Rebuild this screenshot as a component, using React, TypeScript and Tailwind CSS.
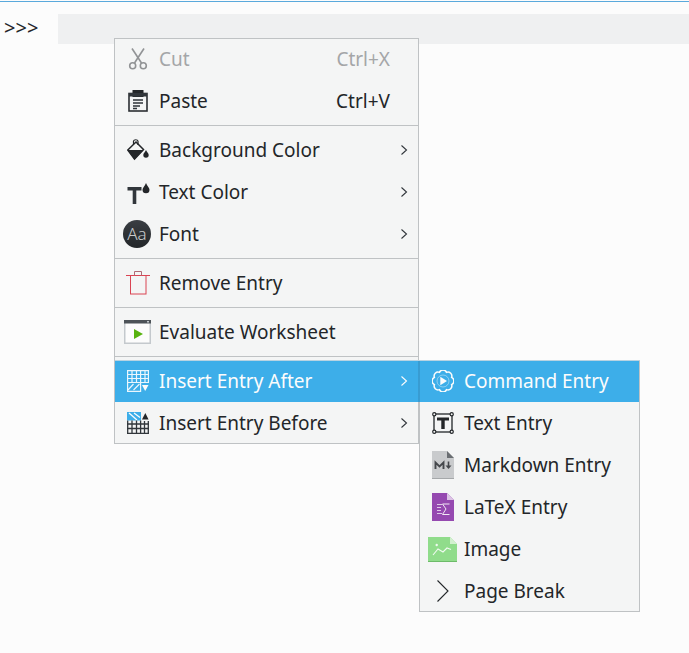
import React from "react";

const Chevron = () => (
  <svg width="8" height="12" viewBox="0 0 8 12" fill="none" stroke="currentColor" strokeWidth="1.1">
    <path d="M1.5 1.5 L6.5 6 L1.5 10.5" />
  </svg>
);

const Scissors = () => (
  <svg width="20" height="22" viewBox="0 0 20 22" fill="none" stroke="#919395" strokeWidth="1.6">
    <path d="M4 0.5 L13.5 15" />
    <path d="M16 0.5 L6.5 15" />
    <circle cx="4.7" cy="17.7" r="3" />
    <circle cx="15.3" cy="17.7" r="3" />
  </svg>
);

const Clipboard = () => (
  <svg width="20" height="22" viewBox="0 0 20 22" fill="none">
    <rect x="1" y="3.5" width="18" height="17.5" fill="#f4f5f5" stroke="#2b2f33" strokeWidth="1.6" />
    <rect x="4.5" y="0" width="11" height="7" fill="#232629" />
    <rect x="1" y="3" width="18" height="3.5" fill="#31363b" />
    <path d="M5 10H15M5 13H15M5 16H12M5 18.5H9" stroke="#31363b" strokeWidth="1.3" />
  </svg>
);

const Bucket = () => (
  <svg width="22" height="22" viewBox="0 0 22 22">
    <path d="M0.8 11 L9 3 L16.5 10.5 L7.5 20 Z" fill="none" stroke="#232629" strokeWidth="1.5" />
    <path d="M0.5 11 H16.5 L7.5 20.5 Z" fill="#232629" />
    <path d="M6.5 5.5 V2.2 A2.3 1.8 0 0 1 11 2.2 V6" fill="none" stroke="#232629" strokeWidth="1.2" />
    <path d="M19 11 C20 13.5 21.7 14.2 21.7 16 A2.7 2.7 0 0 1 16.3 16 C16.3 14.2 18 13.5 19 11 Z" fill="#232629" />
  </svg>
);

const TextColor = () => (
  <svg width="24" height="24" viewBox="0 0 24 24">
    <path d="M1.5 7 H15.5 V10.5 H10.3 V24 H6.7 V10.5 H1.5 Z" fill="#31363b" />
    <path d="M20 3 C21 6 23.5 7.5 23.5 9.7 A3.5 3.5 0 0 1 16.5 9.7 C16.5 7.5 19 6 20 3 Z" fill="#232629" />
  </svg>
);

const FontIcon = () => (
  <div className="-ml-px flex h-[28px] w-[28px] items-center justify-center rounded-full bg-gradient-to-b from-[#3a3e43] to-[#232629] text-[17px] font-light text-[#c8cacc]">
    Aa
  </div>
);

const Trash = () => (
  <svg width="24" height="24" viewBox="0 0 24 24" fill="none" stroke="#da4453" strokeWidth="1">
    <path d="M0 4.5 H24" />
    <rect x="4.5" y="4.5" width="15.5" height="18.5" />
    <path d="M8.5 4.5 V0.5 H15.5 V4.5" stroke="#b06a74" />
  </svg>
);

const Evaluate = () => (
  <svg width="28" height="24" viewBox="0 0 28 24">
    <rect x="0.75" y="0.75" width="25.5" height="22.5" fill="#fcfcfc" stroke="#c4c9cd" strokeWidth="1.5" />
    <rect x="0" y="0" width="27" height="3.5" fill="#4d5358" />
    <rect x="23" y="1" width="2" height="1.5" fill="#c4c9cd" />
    <path d="M10 9 L19 14 L10 19 Z" fill="#58b30f" />
  </svg>
);

const GridAfter = () => (
  <svg width="22" height="22" viewBox="0 0 22 22" fill="none" stroke="#eaf6fd" strokeWidth="1.2">
    <path d="M0 0.6 H22 M0 4.5 H22 M0 8.5 H22 M0 12.5 H22 M0 21.4 H14 M0.6 0 V22 M5 0 V12.5 M9.5 0 V12.5 M13.6 0 V22 M18 0 V12.5 M21.4 0 V13" />
    <path d="M1 20 L6.5 14 M6.5 20 L12.5 14" />
    <path d="M15 15 H21.5 L18.2 21 Z" fill="#fcfcfc" stroke="none" />
  </svg>
);

const GridBefore = () => (
  <svg width="22" height="22" viewBox="0 0 22 22" fill="none" stroke="#31363b" strokeWidth="1.3">
    <rect x="0" y="0" width="14" height="8.5" fill="#3daee9" stroke="none" />
    <path d="M2 1 L10 8 M7 1 L13 5.5" stroke="#fcfcfc" />
    <path d="M0.7 8.5 V21.5 M5 8.5 V21.5 M9.5 8.5 V21.5 M13.6 8.5 V21.5 M17.5 9 V21.5 M21.3 9 V21.5 M0 12 H22 M0 16.5 H22 M0 21.3 H22" />
    <path d="M15 7.5 L18.3 1 L21.6 7.5 Z" fill="#232629" stroke="none" />
  </svg>
);

const CommandIcon = () => (
  <svg width="22" height="22" viewBox="0 0 22 22" fill="none" stroke="#fcfcfc" strokeWidth="1.5">
    <path d="M19.6 14.56 A3.9 3.9 0 0 1 14.56 19.6 A3.9 3.9 0 0 1 7.44 19.6 A3.9 3.9 0 0 1 2.4 14.56 A3.9 3.9 0 0 1 2.4 7.44 A3.9 3.9 0 0 1 7.44 2.4 A3.9 3.9 0 0 1 14.56 2.4 A3.9 3.9 0 0 1 19.6 7.44 A3.9 3.9 0 0 1 19.6 14.56 Z" />
    <circle cx="11" cy="11" r="6" strokeWidth="0.7" opacity="0.6" />
    <path d="M8.3 6.8 L15 11 L8.3 15.2 Z" fill="#fcfcfc" stroke="none" />
  </svg>
);

const TextEntry = () => (
  <svg width="22" height="22" viewBox="0 0 22 22" fill="none" stroke="#232629">
    <rect x="2" y="2" width="18" height="18" strokeWidth="1.3" />
    <circle cx="2.3" cy="2.3" r="1.6" fill="#f4f5f5" strokeWidth="1.2" />
    <circle cx="19.7" cy="2.3" r="1.6" fill="#f4f5f5" strokeWidth="1.2" />
    <circle cx="2.3" cy="19.7" r="1.6" fill="#f4f5f5" strokeWidth="1.2" />
    <circle cx="19.7" cy="19.7" r="1.6" fill="#f4f5f5" strokeWidth="1.2" />
    <path d="M5 5.5 H17 V8.5 H12.7 V17 H9.3 V8.5 H5 Z" fill="#232629" stroke="none" />
  </svg>
);

const Markdown = () => (
  <svg width="22" height="28" viewBox="0 0 22 28">
    <path d="M0 0 H15 L22 7 V28 H0 Z" fill="#c9cbcd" />
    <path d="M15 0 L22 7 H15 Z" fill="#6a6e72" />
    <rect y="27" width="22" height="1" fill="#a5a8aa" />
    <path d="M3.5 18 V11.5 L7.5 15.5 L11.5 11.5 V18" fill="none" stroke="#45484c" strokeWidth="1.9" />
    <path d="M16.5 10.5 V15" stroke="#45484c" strokeWidth="1.6" />
    <path d="M13.5 14.5 H19.5 L16.5 18 Z" fill="#45484c" />
  </svg>
);

const Latex = () => (
  <svg width="22" height="28" viewBox="0 0 22 28">
    <path d="M0 0 H15 L22 7 V28 H0 Z" fill="#9549b0" />
    <path d="M15 0 L22 7 H15 Z" fill="#dcc3e5" />
    <path d="M5 11.5 H10 M5 14.5 H9 M5 17.5 H9 M5 20.5 H10" stroke="#e8d8ee" strokeWidth="0.9" />
    <path d="M17.5 11 H10.5 L14 16 L10.5 21.5 H17.5" fill="none" stroke="#f2e9f5" strokeWidth="1" />
  </svg>
);

const ImageIcon = () => (
  <svg width="29" height="25" viewBox="0 0 29 25">
    <path d="M0 0 H22 L29 7 V25 H0 Z" fill="#90dc8b" />
    <path d="M22 0 L29 7 H22 Z" fill="#d2f0cf" />
    <rect y="24" width="29" height="1" fill="#6dbb69" />
    <circle cx="8.7" cy="8" r="1.2" fill="#f0faf0" />
    <path d="M5 18 L10 12 L15 15 L19 11 L23 12.5" fill="none" stroke="#f0faf0" strokeWidth="1.1" />
  </svg>
);

const PageBreak = () => (
  <svg width="14" height="24" viewBox="0 0 14 24" fill="none" stroke="#232629" strokeWidth="1.1">
    <path d="M1.5 1.5 L12 12 L1.5 22.5" />
  </svg>
);

type RowProps = {
  icon: React.ReactNode;
  label: string;
  shortcut?: string;
  arrow?: boolean;
  disabled?: boolean;
  active?: boolean;
};

const Row = ({ icon, label, shortcut, arrow, disabled, active }: RowProps) => (
  <div
    className={`flex h-[42px] items-center pl-[8px] pr-[10px] ${
      active ? "bg-[#3daee9] text-[#fcfcfc]" : disabled ? "text-[#a4a6a8]" : "text-[#232629]"
    }`}
  >
    <div className="flex w-[29px] items-center justify-center">{icon}</div>
    <span className="ml-[7px] whitespace-nowrap">{label}</span>
    {shortcut && <span className="ml-auto mr-[18px] whitespace-nowrap">{shortcut}</span>}
    {arrow && (
      <span className={`ml-auto ${active ? "text-[#fcfcfc]" : "text-[#31363b]"}`}>
        <Chevron />
      </span>
    )}
  </div>
);

const Sep = () => (
  <div className="flex h-[7px] items-center">
    <div className="h-px w-full bg-[#bfc2c4]" />
  </div>
);

export default function App() {
  return (
    <div
      className="relative h-[653px] w-[689px] overflow-hidden bg-[#fcfcfc] text-[19px] leading-[28px]"
      style={{ fontFamily: '"Noto Sans", sans-serif' }}
    >
      <div className="mt-px h-px bg-[#5aa9dc]" />
      <div className="flex pt-[12px]">
        <div className="w-[58px] pl-[4px] text-[20px] text-[#232629]">&gt;&gt;&gt;</div>
        <div className="h-[30px] flex-1 bg-[#eff0f1]" />
      </div>

      <div className="absolute left-[114px] top-[38px] h-[406px] w-[305px] overflow-hidden border border-[#bfc2c4] bg-[#f4f5f5]">
        <div className="-mt-px">
          <Row icon={<Scissors />} label="Cut" shortcut="Ctrl+X" disabled />
          <Row icon={<Clipboard />} label="Paste" shortcut="Ctrl+V" />
          <Sep />
          <Row icon={<Bucket />} label="Background Color" arrow />
          <Row icon={<TextColor />} label="Text Color" arrow />
          <Row icon={<FontIcon />} label="Font" arrow />
          <Sep />
          <Row icon={<Trash />} label="Remove Entry" />
          <Sep />
          <Row icon={<Evaluate />} label="Evaluate Worksheet" />
          <Sep />
          <Row icon={<GridAfter />} label="Insert Entry After" arrow active />
          <Row icon={<GridBefore />} label="Insert Entry Before" arrow />
        </div>
      </div>

      <div className="absolute left-[419px] top-[360px] w-[221px] border border-[#bfc2c4] bg-[#f4f5f5]">
        <div className="-my-px">
          <Row icon={<CommandIcon />} label="Command Entry" active />
          <Row icon={<TextEntry />} label="Text Entry" />
          <Row icon={<Markdown />} label="Markdown Entry" />
          <Row icon={<Latex />} label="LaTeX Entry" />
          <Row icon={<ImageIcon />} label="Image" />
          <Row icon={<PageBreak />} label="Page Break" />
        </div>
      </div>

      <div className="absolute left-[418px] top-[360px] h-[42px] w-[2px] bg-[#389cd2]" />
      <div className="absolute left-[115px] top-[360px] h-px w-[525px] bg-[#b9d3e2]" />
    </div>
  );
}
